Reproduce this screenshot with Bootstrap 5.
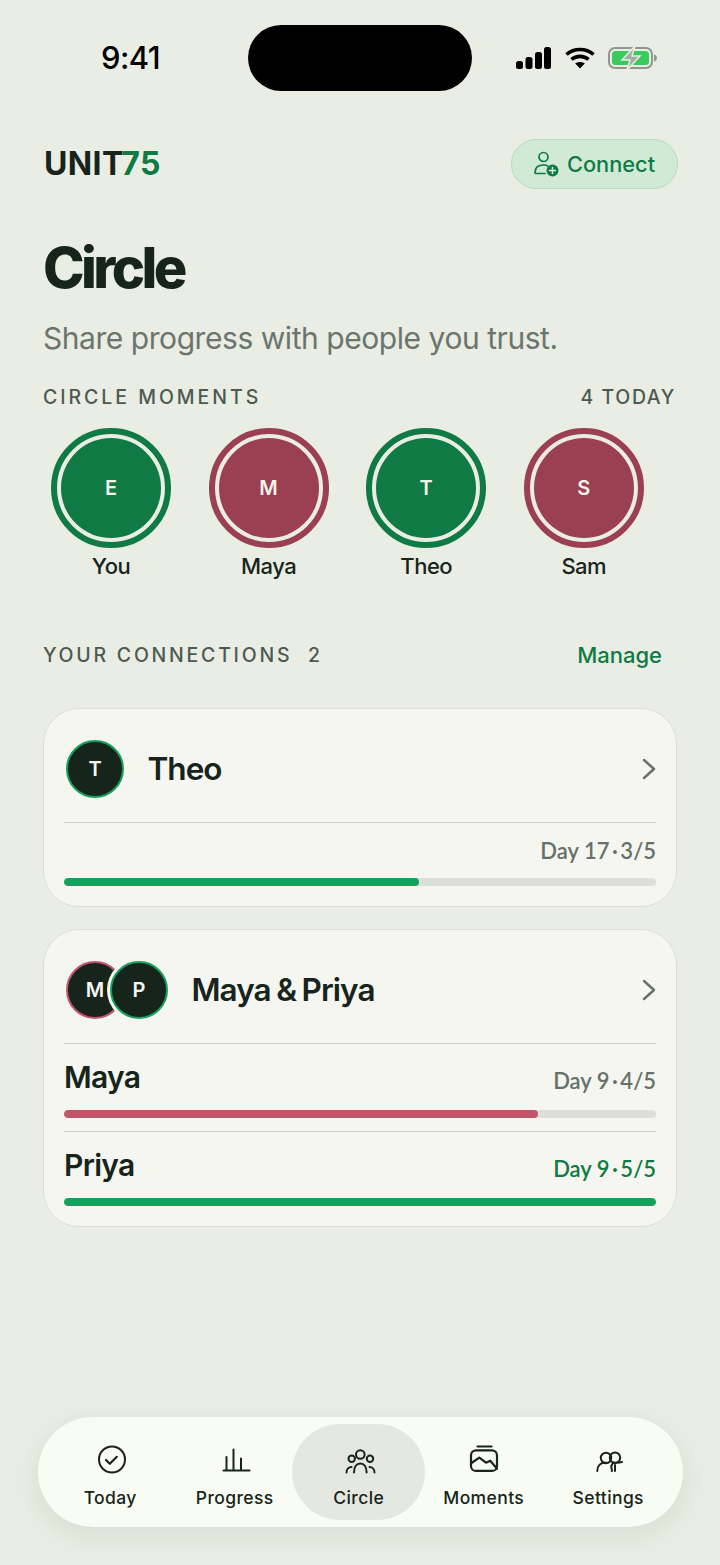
<!DOCTYPE html>
<html lang="en">
<head>
<meta charset="UTF-8">
<meta name="viewport" content="width=device-width, initial-scale=1.0">
<title>Circle</title>
<link href="https://cdn.jsdelivr.net/npm/bootstrap@5.3.0/dist/css/bootstrap.min.css" rel="stylesheet">
<style>
    html, body { background: #e9ede3; }
    body { font-family: Inter, "Liberation Sans", sans-serif; color: #16241c; }
    .screen { width: 720px; height: 1565px; overflow: hidden; }

    /* status bar */
    .status-bar { height: 91px; padding-top: 25px; padding-left: 101px; padding-right: 63px; }
    .status-time { width: 147px; font-size: 31px; font-weight: 500; line-height: 66px; color: #000; letter-spacing: -.6px; flex-shrink: 0; }
    .island { width: 224px; height: 66px; background: #000; border-radius: 33px; flex-shrink: 0; }
    .status-icons { margin-left: 44px; height: 66px; gap: 14px; }

    /* header */
    .app-head { padding: 48px 42px 0 44px; height: 98px; }
    .brand { font-size: 32px; font-weight: 700; letter-spacing: .4px; line-height: 50px; }
    .brand span { color: #0f7a43; }
    .connect-pill { width: 167px; height: 50px; border-radius: 25px; background: #d1ead6; border: 1px solid #b4dcbf; color: #0f7a43; font-size: 21.8px; font-weight: 500; gap: 8px; }

    .page-title { margin: 47px 0 0 0; padding-left: 43px; font-size: 56px; font-weight: 800; letter-spacing: -3.6px; line-height: 64px; }
    .page-sub { padding-left: 43px; margin: 18px 0 0 0; font-size: 30px; color: #6b756e; line-height: 40px; letter-spacing: -.45px; }

    .section-label { font-size: 19.5px; font-weight: 500; letter-spacing: 2.95px; color: #4d5a52; line-height: 24px; }
    .label-tight { letter-spacing: 2.75px; }
    .label-today { letter-spacing: 1.6px; }
    .moments-head { padding: 27px 44px 0 43px; }
    .moments-row { padding: 19px 0 0 51px; gap: 37.6px; }
    .moment { width: 120px; }
    .moment-ring { width: 120px; height: 120px; border-radius: 50%; border: 6px solid; padding: 4px; }
    .moment-fill { width: 100%; height: 100%; border-radius: 50%; color: #f3f3ea; font-size: 20px; font-weight: 600; }
    .moment-name { margin-top: 3px; font-size: 22px; font-weight: 500; line-height: 30px; letter-spacing: -.5px; }
    .ring-green { border-color: #0f7a43; }
    .ring-green .moment-fill { background: #0f7a43; }
    .ring-red { border-color: #9b3f53; }
    .ring-red .moment-fill { background: #9b3f53; }

    .conn-head { padding: 62px 58px 0 43px; }
    .manage-link { color: #0f7a43; font-size: 22px; font-weight: 500; line-height: 24px; letter-spacing: 0; }

    .conn-card { margin: 0 43px 22px 43px; padding: 0 20px; background: #f5f6f0; border: 1px solid #dcdfd8; border-radius: 36px; }
    .conn-list { padding-top: 41px; }
    .card-top { height: 113px; padding-top: 6px; }
    .avatar-dark { width: 58px; height: 58px; margin-left: 2px; border-radius: 50%; background: #16241c; color: #f5f6f0; font-size: 20px; font-weight: 600; border: 2px solid #17a05c; flex-shrink: 0; }
    .avatar-pink { border-color: #c2556b; }
    .avatar-over { margin-left: -14px; box-shadow: 0 0 0 3px #f5f6f0; }
    .conn-name { font-size: 31.5px; font-weight: 600; letter-spacing: -.95px; word-spacing: -1.5px; margin-left: 23.5px; }
    .day-text { font-size: 22px; font-weight: 600; color: #66716a; font-family: Lato, sans-serif; }
    .day-low { margin-top: 6px; }
    .day-done { color: #0f7a43; }
    .dot-sep { margin: 0 -3px; }
    .line-sep { height: 1px; background: #ced1ca; }
    .sep-gap { margin-top: 13px; }
    .track { height: 8px; border-radius: 4px; background: #dddfd9; overflow: hidden; }
    .track-fill { height: 100%; border-radius: 4px; }
    .fill-green { background: #17a05c; }
    .fill-pink { background: #c2556b; }
    .row-one { height: 55px; }
    .row-two { height: 66px; }
    .person-name { font-size: 30px; font-weight: 600; letter-spacing: -.7px; line-height: 40px; }
    .card-end { height: 20px; }

    /* tab bar */
    .tabbar-wrap { position: absolute; left: 38px; top: 1417px; width: 645px; height: 110px; }
    .tabbar { height: 110px; border-radius: 55px; background: #f9fcf2; box-shadow: 0 8px 30px rgba(22, 36, 28, .08); padding: 7px 0 7px 10px; }
    .tab-item { width: 124.5px; height: 96px; border-radius: 48px; font-size: 17.5px; font-weight: 500; letter-spacing: .4px; color: #16241c; padding-top: 21px; line-height: 24px; }
    .tab-item svg { display: block; margin-bottom: 11px; overflow: visible; flex-shrink: 0; }
    .tab-on { background: #e4e8e0; width: 133px; margin: 0 -3.75px 0 -4.75px; }
</style>
</head>
<body class="position-relative">
<div class="screen">

    <div class="status-bar d-flex">
        <div class="status-time">9:41</div>
        <div class="island"></div>
        <div class="status-icons d-flex align-items-center">
            <svg width="35" height="22" viewBox="0 0 35 22"><rect x="0" y="14" width="7" height="8" rx="2.5"/><rect x="9.5" y="10" width="7" height="12" rx="2.5"/><rect x="19" y="5" width="7" height="17" rx="2.5"/><rect x="28" y="0" width="7" height="22" rx="2.5"/></svg>
            <svg width="30" height="22" viewBox="0 0 30 22" fill="none" stroke="#000" stroke-width="3.6"><path d="M1.5 7.5C9 .8 21 .8 28.5 7.5"/><path d="M6.5 12.5c4.800-4.200 12.200-4.200 17 0"/><path d="M15 21.500l-4.800-5c2.800-2 6.800-2 9.600 0z" fill="#000" stroke="none"/></svg>
            <svg width="50" height="24" viewBox="0 0 50 24" style="margin-left:-1px"><rect x="1" y="2" width="43" height="20" rx="6" fill="none" stroke="#8f978f" stroke-width="2"/><rect x="4" y="5" width="37" height="14" rx="3.500" fill="#3acb5e"/><path d="M46 8.500c2 .5 3 2 3 3.500s-1 3-3 3.500z" fill="#8f978f"/><path d="M27 0L14 14h8l-3 10 13-14h-8z" fill="#a4ada5" stroke="#e9ede3" stroke-width="1.500"/></svg>
        </div>
    </div>

    <div class="app-head d-flex justify-content-between">
        <div class="brand">UNIT<span>75</span></div>
        <div class="connect-pill d-flex align-items-center justify-content-center">
            <svg width="25" height="26" viewBox="0 0 25 26" fill="none" stroke="#0f7a43" stroke-width="1.700" stroke-linecap="round"><circle cx="9.500" cy="6" r="4.500"/><path d="M1 21.500c0-5 3.500-7.500 8.500-7.500 1.500 0 3 .2 4 .8M1 21.500c0 .5.400 1 1 1h9"/><circle cx="18.500" cy="19.500" r="6" fill="#0f7a43" stroke="none"/><path d="M18.500 16.500v6M15.500 19.500h6" stroke="#d1ead6" stroke-width="1.600"/></svg>
            Connect
        </div>
    </div>

    <h1 class="page-title">Circle</h1>
    <p class="page-sub">Share progress with people you trust.</p>

    <div class="moments-head d-flex justify-content-between">
        <div class="section-label">CIRCLE MOMENTS</div>
        <div class="section-label label-today">4 TODAY</div>
    </div>

    <div class="moments-row d-flex">
        <div class="moment text-center">
            <div class="moment-ring ring-green"><div class="moment-fill d-flex align-items-center justify-content-center">E</div></div>
            <div class="moment-name">You</div>
        </div>
        <div class="moment text-center">
            <div class="moment-ring ring-red"><div class="moment-fill d-flex align-items-center justify-content-center">M</div></div>
            <div class="moment-name">Maya</div>
        </div>
        <div class="moment text-center">
            <div class="moment-ring ring-green"><div class="moment-fill d-flex align-items-center justify-content-center">T</div></div>
            <div class="moment-name">Theo</div>
        </div>
        <div class="moment text-center">
            <div class="moment-ring ring-red"><div class="moment-fill d-flex align-items-center justify-content-center">S</div></div>
            <div class="moment-name">Sam</div>
        </div>
    </div>

    <div class="conn-head d-flex justify-content-between align-items-center">
        <div class="section-label label-tight">YOUR CONNECTIONS &nbsp;2</div>
        <div class="manage-link">Manage</div>
    </div>

    <div class="conn-list">
        <div class="conn-card">
            <div class="card-top d-flex align-items-center">
                <div class="avatar-dark d-flex align-items-center justify-content-center">T</div>
                <div class="conn-name flex-grow-1">Theo</div>
                <svg width="14" height="22" viewBox="0 0 14 22" fill="none" stroke="#66716a" stroke-width="2.400" stroke-linecap="round" stroke-linejoin="round"><path d="M2 2l10 9-10 9"/></svg>
            </div>
            <div class="line-sep"></div>
            <div class="row-one d-flex justify-content-end align-items-center"><span class="day-text">Day 17 <span class="dot-sep">·</span> 3/5</span></div>
            <div class="track"><div class="track-fill fill-green" style="width:60%"></div></div>
            <div class="card-end"></div>
        </div>

        <div class="conn-card">
            <div class="card-top d-flex align-items-center">
                <div class="avatar-dark avatar-pink d-flex align-items-center justify-content-center">M</div>
                <div class="avatar-dark avatar-over d-flex align-items-center justify-content-center">P</div>
                <div class="conn-name flex-grow-1">Maya &amp; Priya</div>
                <svg width="14" height="22" viewBox="0 0 14 22" fill="none" stroke="#66716a" stroke-width="2.400" stroke-linecap="round" stroke-linejoin="round"><path d="M2 2l10 9-10 9"/></svg>
            </div>
            <div class="line-sep"></div>
            <div class="row-two d-flex justify-content-between align-items-center"><span class="person-name">Maya</span><span class="day-text day-low">Day 9 <span class="dot-sep">·</span> 4/5</span></div>
            <div class="track"><div class="track-fill fill-pink" style="width:80%"></div></div>
            <div class="line-sep sep-gap"></div>
            <div class="row-two d-flex justify-content-between align-items-center"><span class="person-name">Priya</span><span class="day-text day-low day-done">Day 9 <span class="dot-sep">·</span> 5/5</span></div>
            <div class="track"><div class="track-fill fill-green" style="width:100%"></div></div>
            <div class="card-end"></div>
        </div>
    </div>
</div>

<div class="tabbar-wrap">
    <div class="tabbar d-flex">
        <div class="tab-item d-flex flex-column align-items-center">
            <svg width="30" height="30" viewBox="0 0 30 30" fill="none" stroke="#16241c" stroke-width="2"><circle cx="17" cy="14.500" r="13"/><path d="M11 15l3.800 3.800 7-7" stroke-width="2.200" stroke-linecap="round" stroke-linejoin="round"/></svg>
            Today
        </div>
        <div class="tab-item d-flex flex-column align-items-center">
            <svg width="30" height="30" viewBox="0 0 30 30" fill="none" stroke="#16241c" stroke-width="2" stroke-linecap="round"><path d="M3.500 25.500h26M6.500 25V12M13.500 25V4.500M21 25V13.500"/></svg>
            Progress
        </div>
        <div class="tab-item tab-on d-flex flex-column align-items-center">
            <svg width="30" height="30" viewBox="0 0 30 30" fill="none" stroke="#16241c" stroke-width="2" stroke-linecap="round"><circle cx="16.300" cy="9.500" r="4.300"/><circle cx="7.700" cy="13.700" r="3.200"/><circle cx="26" cy="13.700" r="3.200"/><path d="M10 27.500c0-5.500 2.500-9 6.300-9s6.300 3.500 6.300 9M2.500 27.500c0-3 2-5.500 5-5.500M30.500 27.500c0-3-2-5.500-5-5.500"/></svg>
            Circle
        </div>
        <div class="tab-item d-flex flex-column align-items-center">
            <svg width="30" height="30" viewBox="0 0 30 30" fill="none" stroke="#16241c" stroke-width="2.200" stroke-linecap="round" stroke-linejoin="round"><path d="M8.500 1.500h14"/><rect x="2" y="5.400" width="26" height="20.500" rx="5"/><path d="M2.500 18l7.800-5.300 6.700 5 4.300-2 6.700 8"/></svg>
            Moments
        </div>
        <div class="tab-item d-flex flex-column align-items-center">
            <svg width="30" height="30" viewBox="0 0 30 30" fill="none" stroke="#16241c" stroke-width="2" stroke-linecap="round"><circle cx="13" cy="13" r="5.200"/><circle cx="22" cy="12.700" r="5.200"/><path d="M4.300 26c0-5.500 3.500-8.500 8.500-8.500M19 26l-.8-5 1.800-3M22 26v-6M20 17.500c4 .5 6 .3 9-.5"/></svg>
            Settings
        </div>
    </div>
</div>

<script src="https://cdn.jsdelivr.net/npm/bootstrap@5.3.0/dist/js/bootstrap.bundle.min.js"></script>
</body>
</html>
